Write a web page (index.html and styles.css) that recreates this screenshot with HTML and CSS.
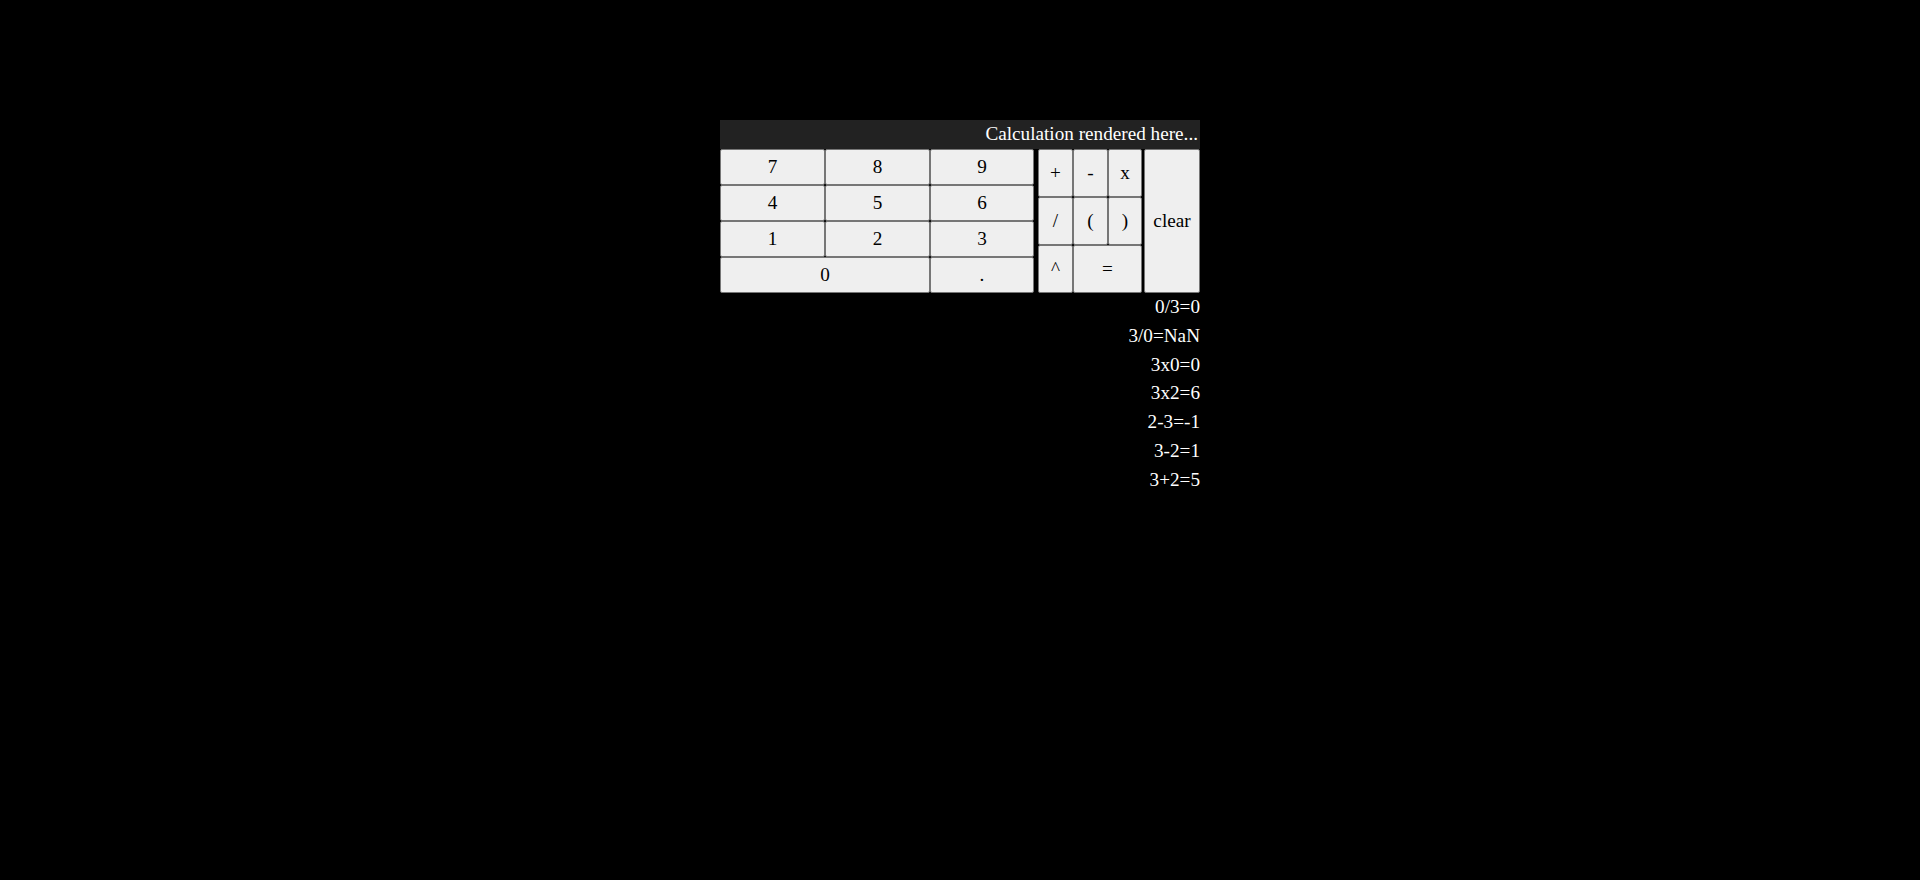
FILE: index.html
```html
<!DOCTYPE html>
<html>
<head>
<meta charset="utf-8">
<title>Calculator</title>
<link rel="stylesheet" href="styles.css">
</head>
<body>
<div class="calc">
  <div class="display">Calculation rendered here...</div>
  <div class="pad">
    <div class="nums">
      <button class="btn">7</button>
      <button class="btn">8</button>
      <button class="btn">9</button>
      <button class="btn">4</button>
      <button class="btn">5</button>
      <button class="btn">6</button>
      <button class="btn">1</button>
      <button class="btn">2</button>
      <button class="btn">3</button>
      <button class="btn span2">0</button>
      <button class="btn">.</button>
    </div>
    <div class="ops">
      <button class="btn">+</button>
      <button class="btn">-</button>
      <button class="btn">x</button>
      <button class="btn">/</button>
      <button class="btn">(</button>
      <button class="btn">)</button>
      <button class="btn">^</button>
      <button class="btn span2">=</button>
    </div>
    <button class="btn clear">clear</button>
  </div>
  <ul class="history">
    <li>0/3=0</li>
    <li>3/0=NaN</li>
    <li>3x0=0</li>
    <li>3x2=6</li>
    <li>2-3=-1</li>
    <li>3-2=1</li>
    <li>3+2=5</li>
  </ul>
</div>
</body>
</html>
```

FILE: styles.css
```css
html, body {
  margin: 0;
  padding: 0;
  background: #000;
}

body {
  font-family: "Times New Roman", "Liberation Serif", serif;
  font-size: 19.2px;
  color: #fff;
  padding-top: 120px;
}

.calc {
  width: 480px;
  margin: 0 auto;
}

.display {
  background: #222;
  color: #fff;
  text-align: right;
  line-height: 1.5;
  height: 29px;
  padding: 0 2px;
  white-space: nowrap;
}

.pad {
  display: flex;
  height: 144px;
}

.nums {
  width: 314px;
  display: grid;
  grid-template-columns: 105px 105px 104px;
  grid-template-rows: repeat(4, 36px);
}

.ops {
  width: 104px;
  margin-left: 4px;
  display: grid;
  grid-template-columns: 35px 35px 34px;
  grid-template-rows: repeat(3, 48px);
}

.btn {
  appearance: none;
  background: #efefef;
  border: 1px solid #767676;
  border-radius: 2px;
  color: #000;
  font-family: "Times New Roman", "Liberation Serif", serif;
  font-size: 19.2px;
  padding: 0;
  margin: 0;
  line-height: 1;
}

.span2 {
  grid-column: span 2;
}

.clear {
  margin-left: 2px;
  width: 56px;
  height: 144px;
}

.history {
  list-style: none;
  margin: 0;
  padding: 0;
  text-align: right;
  line-height: 1.5;
}
```
